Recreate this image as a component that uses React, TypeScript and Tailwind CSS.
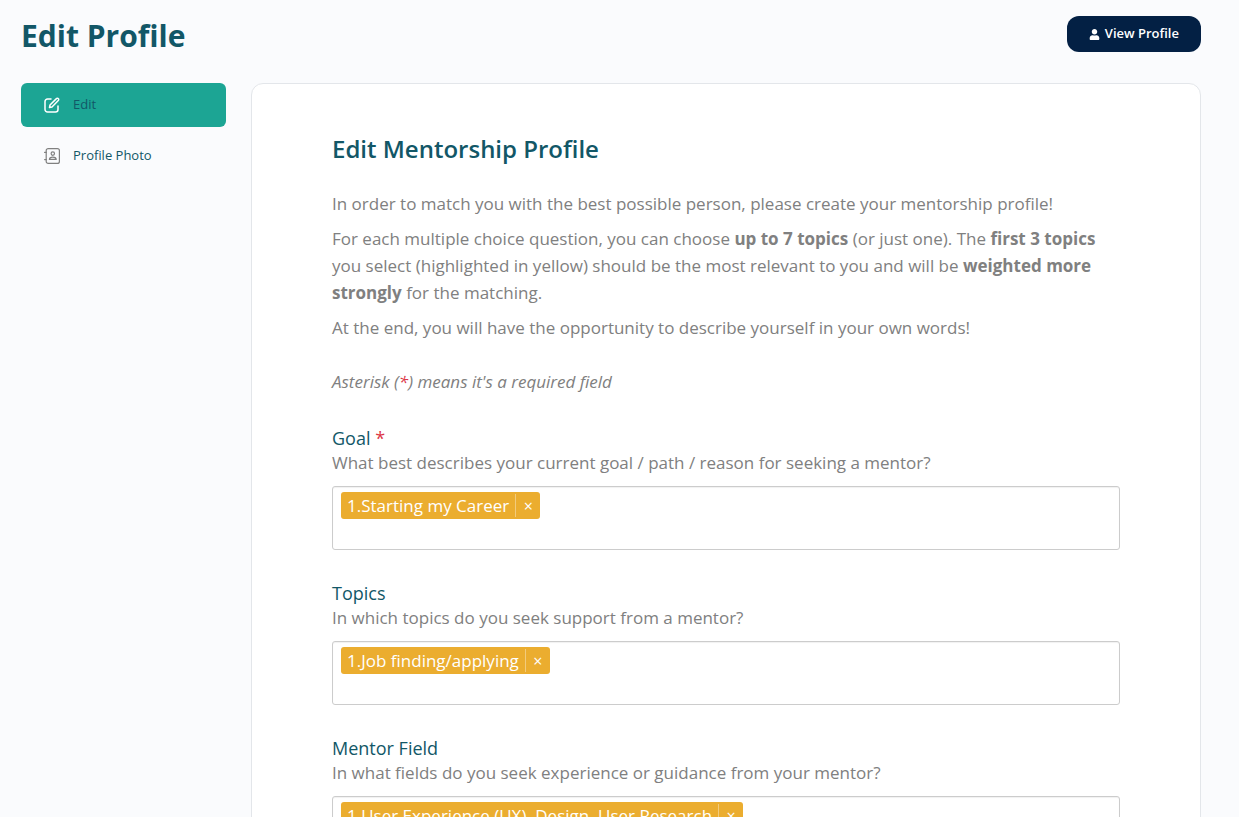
import { useState } from "react";
import { FaUser } from "react-icons/fa";

interface Field {
  id: string;
  label: string;
  required?: boolean;
  question: string;
  options: string[];
}

const fields: Field[] = [
  {
    id: "goal",
    label: "Goal",
    required: true,
    question: "What best describes your current goal / path / reason for seeking a mentor?",
    options: ["Starting my Career"],
  },
  {
    id: "topics",
    label: "Topics",
    question: "In which topics do you seek support from a mentor?",
    options: ["Job finding/applying"],
  },
  {
    id: "mentor-field",
    label: "Mentor Field",
    question: "In what fields do you seek experience or guidance from your mentor?",
    options: ["User Experience (UX), Design, User Research"],
  },
];

function EditIcon() {
  return (
    <svg className="size-4" viewBox="0 0 16 16" fill="none" stroke="currentColor" strokeWidth="1.5" strokeLinecap="round" strokeLinejoin="round">
      <path d="M7 2H3.5A2.5 2.5 0 0 0 1 4.5v8A2.5 2.5 0 0 0 3.5 15h8a2.5 2.5 0 0 0 2.5-2.5V9" />
      <path d="M5.5 10.5 6 8l6.4-6.4a1.3 1.3 0 0 1 1.9 0 1.3 1.3 0 0 1 0 1.9L8 10z" />
    </svg>
  );
}

function ContactIcon() {
  return (
    <svg className="size-4" viewBox="0 0 16 16" fill="none" stroke="currentColor" strokeWidth="1.2" strokeLinecap="round" strokeLinejoin="round">
      <rect x="2.2" y="0.6" width="13.2" height="14.8" rx="2" />
      <path d="M0.6 4.4h1.6M0.6 11.6h1.6" />
      <circle cx="8.8" cy="5.6" r="1.7" />
      <path d="M5.4 11.4c0-1.5 1.2-2.3 3.4-2.3s3.4.8 3.4 2.3z" />
    </svg>
  );
}

function TagField({ field }: { field: Field }) {
  const [selected, setSelected] = useState(field.options);

  const removeOption = (option: string) => {
    setSelected((prev) => prev.filter((item) => item !== option));
  };

  return (
    <div className="mb-[31px]">
      <label htmlFor={field.id} className="block text-lg leading-6 text-[#125767]">
        {field.label}
        {field.required && <span className="text-[#dc3545]"> *</span>}
      </label>
      <p className="text-[17px] leading-[25px] text-[#808080]">{field.question}</p>
      <div className="mt-[11px] flex min-h-16 flex-wrap content-start rounded-[3px] border border-[#cccccc] bg-white px-2 pt-[5px] shadow-[inset_0_1px_1px_rgba(0,0,0,0.06)]">
        {selected.map((option, index) => (
          <span key={option} className="flex h-[27px] items-center rounded-[3px] bg-[#ebad2f] text-[17px] text-white">
            <span className="px-1.5">
              {index + 1}.{option}
            </span>
            <button
              type="button"
              aria-label={`Remove ${option}`}
              className="h-[23px] w-[25px] border-l border-[#f2cb7c] text-base leading-5"
              onClick={() => removeOption(option)}
            >
              ×
            </button>
          </span>
        ))}
        <input id={field.id} type="text" className="h-7 min-w-4 flex-1 px-2 text-[17px] outline-none" />
      </div>
    </div>
  );
}

export default function App() {
  return (
    <div className="min-h-screen bg-[#fafbfd] pt-4 pr-[38px] pl-[21px] font-['Open_Sans',sans-serif]">
      <header className="flex items-start justify-between">
        <h1 className="text-3xl leading-10 font-bold text-[#125767]">Edit Profile</h1>
        <a href="#profile" className="flex h-9 items-center gap-[5px] rounded-xl bg-[#032044] px-[22px] text-[13px] font-semibold text-white">
          <FaUser className="size-[11px]" />
          View Profile
        </a>
      </header>

      <div className="mt-[27px] flex items-start gap-[25px]">
        <nav className="flex w-[205px] shrink-0 flex-col gap-[7px] text-[13px] text-[#125767]">
          <a href="#edit" className="flex h-11 items-center gap-[13px] rounded-md bg-[#1ca594] px-[23px]">
            <span className="text-white">
              <EditIcon />
            </span>
            Edit
          </a>
          <a href="#photo" className="flex h-11 items-center gap-[13px] rounded-md px-[23px]">
            <span className="text-[#808080]">
              <ContactIcon />
            </span>
            Profile Photo
          </a>
        </nav>

        <main className="min-w-0 flex-1 rounded-xl border border-[#e3e6ea] bg-white px-20 pt-[49px] pb-20">
          <h2 className="text-2xl leading-8 font-semibold text-[#125767]">Edit Mentorship Profile</h2>

          <div className="mt-[25px] space-y-2 text-[17px] leading-[27px] text-[#808080]">
            <p>In order to match you with the best possible person, please create your mentorship profile!</p>
            <p>
              For each multiple choice question, you can choose <strong>up to 7 topics</strong> (or just one). The{" "}
              <strong>first 3 topics</strong> you select (highlighted in yellow) should be the most relevant to you and will be{" "}
              <strong>weighted more strongly</strong> for the matching.
            </p>
            <p>At the end, you will have the opportunity to describe yourself in your own words!</p>
          </div>
          <p className="mt-[27px] text-[17px] leading-[27px] text-[#808080] italic">
            Asterisk (<span className="text-[#dc3545]">*</span>) means it's a required field
          </p>

          <form className="mt-[31px]">
            {fields.map((field) => (
              <TagField key={field.id} field={field} />
            ))}
          </form>
        </main>
      </div>
    </div>
  );
}
